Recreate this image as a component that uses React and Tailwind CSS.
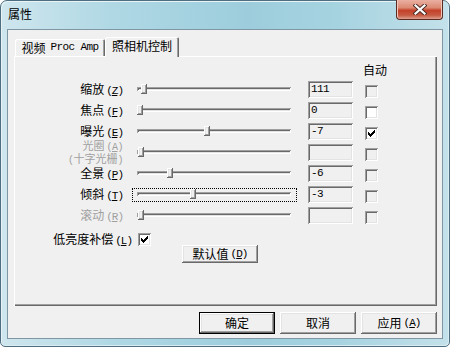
import React from "react";

const raised =
  "bg-[#f0f0f0] shadow-[inset_-1px_-1px_#696969,inset_1px_1px_#ffffff,inset_-2px_-2px_#a0a0a0,inset_2px_2px_#e3e3e3]";
const sunken =
  "shadow-[inset_1px_1px_#a0a0a0,inset_-1px_-1px_#ffffff,inset_2px_2px_#696969,inset_-2px_-2px_#e3e3e3]";

function Mn({ k }) {
  return (
    <span className="font-['Liberation_Mono',monospace] text-[11px] tracking-[-1px] ml-[2px]">
      (<span className="underline underline-offset-[1px]">{k}</span>)
    </span>
  );
}

function Check() {
  return (
    <svg width="7" height="7" viewBox="0 0 7 7" shapeRendering="crispEdges">
      <path d="M0 2h1v3H0zM1 3h1v3H1zM2 4h1v3H2zM3 3h1v3H3zM4 2h1v3H4zM5 1h1v3H5zM6 0h1v3H6z" fill="#000" />
    </svg>
  );
}

function CheckBox({ white, checked }) {
  return (
    <div
      className={`w-[13px] h-[13px] flex items-center justify-center ${sunken} ${
        white ? "bg-white" : "bg-[#f0f0f0]"
      }`}
    >
      {checked && <Check />}
    </div>
  );
}

const rows = [
  { label: "缩放", k: "Z", val: "111", thumb: 4, white: false },
  { label: "焦点", k: "F", val: "0", thumb: 0, white: true },
  { label: "曝光", k: "E", val: "-7", thumb: 67, white: true, checked: true },
  { label: "光圈", k: "A", sub: true, val: "", thumb: 1, disabled: true },
  { label: "全景", k: "P", val: "-6", thumb: 30 },
  { label: "倾斜", k: "T", val: "-3", thumb: 53, focus: true },
  { label: "滚动", k: "R", val: "", thumb: 1, disabled: true },
];

function Row({ r }) {
  return (
    <div className="h-[21px] flex items-start">
      <div
        className={`w-[108px] h-[17px] flex flex-col items-end justify-center ${
          r.disabled ? "text-[#a0a0a0]" : "text-black"
        }`}
      >
        {r.sub ? (
          <>
            <div className="text-[11px] leading-[11px] whitespace-nowrap">
              {r.label}
              <span className="font-['Liberation_Mono',monospace] text-[10px] tracking-[-0.5px] ml-[2px]">
                (<span className="underline underline-offset-[1px]">{r.k}</span>)
              </span>
            </div>
            <div className="text-[11px] leading-[11px] whitespace-nowrap">
              <span className="font-['Liberation_Mono',monospace] text-[10px] tracking-[-0.5px]">(</span>
              十字光栅
              <span className="font-['Liberation_Mono',monospace] text-[10px] tracking-[-0.5px]">)</span>
            </div>
          </>
        ) : (
          <div className="leading-[14px] whitespace-nowrap">
            {r.label}
            <Mn k={r.k} />
          </div>
        )}
      </div>
      <div
        className={`ml-[9px] mt-[2px] w-[165px] h-[14px] border px-[4px] pt-[3px] ${
          r.focus ? "border-dotted border-black" : "border-transparent"
        }`}
      >
        <div className={`relative w-[154px] h-[4px] bg-[#f0f0f0] ${sunken}`}>
          <div
            className={`absolute top-[-3px] w-[6px] h-[10px] ${raised}`}
            style={{ left: r.thumb }}
          />
        </div>
      </div>
      <div
        className={`ml-[11px] w-[45px] h-[17px] bg-[#f0f0f0] ${sunken} flex items-center pl-[3px] font-['Liberation_Mono',monospace] text-[11px] tracking-[-0.6px] text-black`}
      >
        {r.val}
      </div>
      <div className="ml-[12px] mt-[4px]">
        <CheckBox white={r.white} checked={r.checked} />
      </div>
    </div>
  );
}

function Btn({ children, def, w = "w-[76px]", h = "h-[22px]" }) {
  return (
    <div
      className={`${w} ${h} ${def ? "border border-black" : ""} ${raised} flex items-center justify-center text-[12px] text-black`}
    >
      {children}
    </div>
  );
}

export default function App() {
  return (
    <div className="w-[450px] h-[347px] overflow-hidden bg-white">
      <div className="w-[450px] h-[347px] flex flex-col border border-[#4f6f80] rounded-t-[7px] rounded-b-[5px] bg-[linear-gradient(90deg,#cfe6ee_0%,#afd8e4_25%,#9dcddc_55%,#a6d3e0_75%,#c3e1ea_100%)] shadow-[inset_1px_1px_#e6f4f8,inset_-1px_-1px_#d8ecf2] font-['Noto_Sans_CJK_SC',sans-serif] text-[12px]">
        <div className="h-[28px] flex items-start justify-between">
          <div className="pl-[7px] pt-[5px] text-[12px] leading-[16px] text-black">属性</div>
          <div className="-mt-[1px] mr-[6px] w-[47px] h-[20px] rounded-b-[4px] border border-t-0 border-[#5b2a20] bg-[linear-gradient(180deg,#eab0a2_0%,#dc8a74_40%,#c4412a_55%,#c65a42_80%,#e0a090_100%)] shadow-[inset_1px_0_#f3c8bc,inset_-1px_0_#f3c8bc] flex items-center justify-center">
            <svg width="14" height="11" viewBox="0 0 14 11">
              <path d="M2.5 1.5 L11.5 9.5 M11.5 1.5 L2.5 9.5" stroke="#4a2a24" strokeWidth="4" strokeLinecap="square" />
              <path d="M2.5 1.5 L11.5 9.5 M11.5 1.5 L2.5 9.5" stroke="#ffffff" strokeWidth="2.2" strokeLinecap="square" />
            </svg>
          </div>
        </div>
        <div className="ml-[6px] w-[436px] h-[310px] border border-[#7f97a5] bg-[#f0f0f0] flex flex-col">
          <div className="mt-[7px] ml-[6px] h-[19px] flex items-end">
            <div className="ml-[1px] w-[90px] h-[17px] bg-[#f0f0f0] rounded-t-[2px] shadow-[inset_1px_1px_#ffffff,inset_-1px_0_#696969,inset_-2px_0_#a0a0a0] flex items-center justify-center text-black whitespace-nowrap">
              视频
              <span className="font-['Liberation_Mono',monospace] text-[11px] tracking-[-0.6px] ml-[5px]">Proc Amp</span>
            </div>
            <div className="relative z-10 -mb-[1px] w-[74px] h-[20px] bg-[#f0f0f0] rounded-t-[2px] shadow-[inset_1px_1px_#ffffff,inset_-1px_0_#696969,inset_-2px_0_#a0a0a0] flex items-center justify-center pb-[2px] text-black">
              照相机控制
            </div>
          </div>
          <div className="ml-[6px] w-[423px] h-[250px] pl-[1px] pt-[1px] bg-[#f0f0f0] shadow-[inset_1px_1px_#ffffff,inset_-1px_-1px_#696969,inset_-2px_-2px_#a0a0a0] flex flex-col">
            <div className="h-[24px] pl-[348px] pt-[6px] leading-[14px] text-black">自动</div>
            {rows.map((r) => (
              <Row key={r.label} r={r} />
            ))}
            <div className="mt-[5px] h-[13px] flex items-center">
              <div className="w-[117px] text-right leading-[14px] whitespace-nowrap text-black">
                低亮度补偿
                <Mn k="L" />
              </div>
              <div className="ml-[6px]">
                <CheckBox white checked />
              </div>
            </div>
            <div className="ml-[167px] -mt-[1px]">
              <Btn h="h-[18px]">
                默认值
                <Mn k="D" />
              </Btn>
            </div>
          </div>
          <div className="mt-[6px] pr-[5px] flex justify-end gap-[5px]">
            <Btn def>确定</Btn>
            <Btn>取消</Btn>
            <Btn>
              应用
              <Mn k="A" />
            </Btn>
          </div>
        </div>
      </div>
    </div>
  );
}
